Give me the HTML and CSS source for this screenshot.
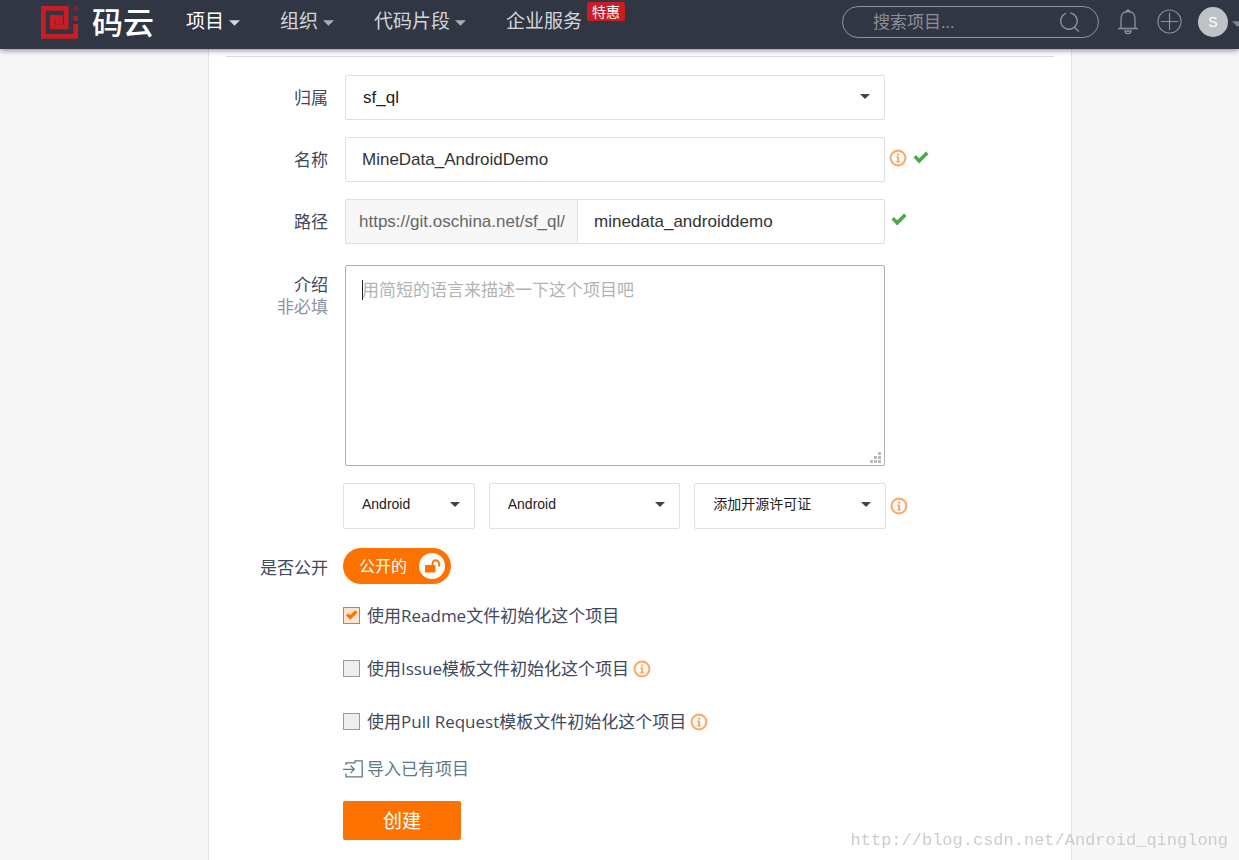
FILE: index.html
```
<!DOCTYPE html>
<html lang="zh-CN">
<head>
<meta charset="utf-8">
<title>码云</title>
<link rel="stylesheet" href="styles.css">
</head>
<body>
<svg class="defs" aria-hidden="true">
  <symbol id="caret" viewBox="0 0 12 6"><path d="M0 0h12L6 6z" fill="currentColor"/></symbol>
  <symbol id="info" viewBox="0 0 18 18"><circle cx="9" cy="9" r="7.4" fill="none" stroke="currentColor" stroke-width="2.2"/><path d="M8 4.4h2.200v2H8zM6.800 7.400h3.400v4.800h1.200v1.300H6.800v-1.300H8V8.700H6.800z" fill="currentColor"/></symbol>
  <symbol id="check" viewBox="0 0 16 13"><path d="M0.500 6.500 3 4l3.200 3.200L13 0.500l2.600 2.600L6.200 12.400z" fill="currentColor"/></symbol>
</svg>
<header class="topbar">
  <a class="brand" href="#">
    <svg class="brand-mark" viewBox="0 0 37 33" aria-hidden="true"><path d="M34.600 18V30.300H2.400V2.400H25.200V20.800H11.400V11.300H19.500V15.800H14.500" fill="none" stroke="#c71d23" stroke-width="4.800"/><path d="M32.200 10h4.800v4.800h-4.800z" fill="#a82029"/><path d="M32.200 0h4.800v4.800h-4.800z" fill="#7b2631"/></svg>
    <span class="brand-name">码云</span>
  </a>
  <nav class="nav">
    <a class="nav-item active" href="#">项目<svg class="caret"><use href="#caret"/></svg></a>
    <a class="nav-item" href="#">组织<svg class="caret"><use href="#caret"/></svg></a>
    <a class="nav-item" href="#">代码片段<svg class="caret"><use href="#caret"/></svg></a>
    <a class="nav-item" href="#">企业服务<span class="badge">特惠</span></a>
  </nav>
  <div class="tools">
    <div class="search">
      <input class="search-input" type="search" placeholder="搜索项目..." aria-label="搜索项目">
      <svg class="search-icon" viewBox="0 0 20 20" aria-hidden="true"><path d="M6 1.400A8.200 8.200 0 1 0 10.500 1M14.500 15.500l4.500 4" fill="none" stroke="currentColor" stroke-width="1.400"/></svg>
    </div>
    <button class="icon-button" type="button" aria-label="通知"><svg class="bell" viewBox="0 0 20 26"><path d="M0 19.500h20M3 19.500V9.500C3 5 6 2.500 10 2.500s7 2.500 7 7v10M8.500 2.500c0-2 3-2 3 0M7 22c0 3.500 6 3.500 6 0z" fill="none" stroke="currentColor" stroke-width="1.300"/></svg></button>
    <button class="icon-button" type="button" aria-label="新建"><svg class="plus" viewBox="0 0 26 26"><circle cx="13" cy="13" r="12" fill="none" stroke="currentColor" stroke-width="1.200"/><path d="M4 13h18M13 4v18" stroke="currentColor" stroke-width="1.200"/></svg></button>
    <button class="account" type="button" aria-label="账户"><span class="avatar">S</span><svg class="caret"><use href="#caret"/></svg></button>
  </div>
</header>

<main class="page">
  <form class="form">
    <div class="row">
      <label class="label" for="owner">归属</label>
      <div class="select-wrap">
        <select class="control select" id="owner"><option>sf_ql</option></select>
        <svg class="select-caret"><use href="#caret"/></svg>
      </div>
    </div>
    <div class="row">
      <label class="label" for="name">名称</label>
      <input class="control" id="name" type="text" value="MineData_AndroidDemo">
      <div class="marks"><svg class="info"><use href="#info"/></svg><svg class="check"><use href="#check"/></svg></div>
    </div>
    <div class="row">
      <label class="label" for="path">路径</label>
      <div class="group">
        <span class="prefix">https://git.oschina.net/sf_ql/</span>
        <input class="control path-input" id="path" type="text" value="minedata_androiddemo">
      </div>
      <div class="marks marks-single"><svg class="check"><use href="#check"/></svg></div>
    </div>
    <div class="row row-top">
      <label class="label label-stack" for="intro">介绍<span class="optional">非必填</span></label>
      <div class="textarea-wrap">
        <textarea class="control textarea" id="intro" placeholder="用简短的语言来描述一下这个项目吧"></textarea>
        <svg class="grip" viewBox="0 0 11 11" aria-hidden="true"><path d="M8 0h3v3H8zM4 4h3v3H4zM8 4h3v3H8zM0 8h3v3H0zM4 8h3v3H4zM8 8h3v3H8z" fill="#bbb"/></svg>
      </div>
    </div>
    <div class="row row-wide">
      <span></span>
      <div class="selects">
        <div class="select-wrap"><select class="control select small" aria-label="语言"><option>Android</option></select><svg class="select-caret"><use href="#caret"/></svg></div>
        <div class="select-wrap"><select class="control select small" aria-label=".gitignore"><option>Android</option></select><svg class="select-caret"><use href="#caret"/></svg></div>
        <div class="select-wrap"><select class="control select small" aria-label="开源许可证"><option>添加开源许可证</option></select><svg class="select-caret"><use href="#caret"/></svg></div>
      </div>
      <svg class="info"><use href="#info"/></svg>
    </div>
    <div class="row row-wide">
      <span class="label label-low" id="public-label">是否公开</span>
      <div>
        <button class="toggle" type="button" aria-describedby="public-label">公开的
          <span class="knob"><svg class="lock" viewBox="0 0 17 14" aria-hidden="true"><path d="M1 6h10.500v7.500H1z" fill="currentColor"/><path d="M8.500 6.500V4.500a3.200 3.200 0 0 1 6.500 0V7.500" fill="none" stroke="currentColor" stroke-width="1.800"/></svg></span>
        </button>
      </div>
    </div>
    <div class="options">
      <div class="option"><input class="tick" type="checkbox" id="readme" checked><label for="readme">使用Readme文件初始化这个项目</label></div>
      <div class="option"><input class="tick" type="checkbox" id="issue"><label for="issue">使用Issue模板文件初始化这个项目</label><svg class="info"><use href="#info"/></svg></div>
      <div class="option"><input class="tick" type="checkbox" id="pull"><label for="pull">使用Pull Request模板文件初始化这个项目</label><svg class="info"><use href="#info"/></svg></div>
      <a class="import" href="#"><svg class="import-icon" viewBox="0 0 20 18" aria-hidden="true"><path d="M3 5V2.800h9V.8h7.200v16H3v-3.300M0 9.300h11M7.500 5.500l3.800 3.800-3.800 3.800" fill="none" stroke="currentColor" stroke-width="1.300"/></svg>导入已有项目</a>
      <button class="submit" type="submit">创建</button>
    </div>
  </form>
</main>
<div class="watermark">http://blog.csdn.net/Android_qinglong</div>
</body>
</html>
```

FILE: styles.css
```
* { box-sizing: border-box; }
body {
  margin: 0;
  min-height: 100vh;
  display: flex;
  flex-direction: column;
  background: #f7f7f7;
  color: #40485b;
  font: 17px/22px "Open Sans", "Noto Sans CJK SC", sans-serif;
}
input, select, textarea, button { font: inherit; color: inherit; margin: 0; }
a { color: inherit; text-decoration: none; }
button { border: 0; padding: 0; background: none; cursor: pointer; }
svg { display: block; flex: none; }
.defs { position: absolute; width: 0; height: 0; }

.topbar {
  position: relative;
  display: flex;
  align-items: flex-start;
  height: 49px;
  padding-left: 41px;
  background: #303643;
  box-shadow: 0 1px 6px rgba(0, 0, 0, .5);
  clip-path: inset(0 0 -12px 0);
}
.brand { display: flex; align-items: center; gap: 14px; height: 44px; }
.brand-mark { width: 37px; height: 33px; }
.brand-name { color: #fff; font-size: 31px; font-weight: 500; line-height: 44px; }
.nav { display: flex; gap: 40px; margin-left: 32px; }
.nav-item {
  display: flex;
  align-items: center;
  gap: 5px;
  height: 42px;
  color: #d3d6d9;
  font-size: 19px;
  white-space: nowrap;
}
.active { color: #fff; }
.caret { width: 11px; height: 6px; margin-top: 4px; color: #a9acb3; }
.active .caret { color: #d3d6d9; }
.badge {
  align-self: flex-start;
  margin-top: 2px;
  padding: 0 5px;
  border-radius: 2px;
  background: #c71d23;
  color: #fff;
  font-size: 14px;
  line-height: 19px;
}
.tools { display: flex; align-items: center; height: 43px; margin-left: auto; color: #8c92a4; }
.search {
  display: flex;
  align-items: center;
  width: 257px;
  height: 32px;
  padding: 0 18px 0 30px;
  border: 1px solid #8c92a4;
  border-radius: 16px;
}
.search-input { flex: 1; min-width: 0; padding: 0; border: 0; outline: 0; background: none; }
.search-input::placeholder { color: #8d8f96; }
.search-icon { width: 20px; height: 20px; }
.icon-button { margin-left: 19px; }
.bell { width: 20px; height: 26px; }
.plus { width: 25px; height: 25px; }
.account { display: flex; align-items: center; gap: 4px; width: 41px; margin-left: 16px; overflow: hidden; }
.account .caret { color: #7d8391; }
.avatar {
  flex: none;
  width: 30px;
  height: 30px;
  border-radius: 50%;
  background: #bdc3c7;
  color: #fff;
  font: 14px/30px "Liberation Sans", sans-serif;
}

.page {
  flex: 1;
  margin: 0 167px 0 208px;
  padding: 7px 17px 20px;
  border: solid #e1e5e9;
  border-width: 0 1px;
  background: #fff;
}
.form {
  display: flex;
  flex-direction: column;
  gap: 17px;
  padding-top: 18px;
  border-top: 1px solid #ddd;
}
.row {
  display: grid;
  grid-template-columns: 102px minmax(0, 540px) auto;
  column-gap: 17px;
  align-items: center;
}
.row-wide { grid-template-columns: 102px minmax(0, 543px) auto; column-gap: 15px; }
.row-wide > .info { margin-left: -11px; }
.row-top { align-items: start; margin-top: 4px; }
.label { text-align: right; }
.label-stack { padding-top: 9px; }
.label-low { padding-top: 6px; }
.optional { display: block; color: #8c92a4; }
.control {
  display: block;
  width: 100%;
  height: 45px;
  padding: 0 16px;
  border: 1px solid #dce1e6;
  border-radius: 2px;
  outline: 0;
  background: #fff;
  color: #333;
  font-family: "Liberation Sans", "Noto Sans CJK SC", sans-serif;
}
.select-wrap, .textarea-wrap { position: relative; }
.select { appearance: none; padding-left: 17px; color: #222; }
.select-caret {
  position: absolute;
  top: 19px;
  right: 15px;
  width: 10px;
  height: 5px;
  color: #444;
  pointer-events: none;
}
.small { height: 46px; padding: 0 18px 4px; font-size: 14px; }
.selects { display: grid; grid-template-columns: 132fr 192fr 192fr; gap: 14px; }
.marks { display: flex; align-items: center; gap: 6px; margin: -4px 0 0 -13px; }
.marks-single { margin-left: -11px; }
.info { width: 18px; height: 18px; color: #feab69; }
.check { width: 16px; height: 13px; color: #49ac4f; }
.group { display: flex; }
.prefix {
  flex: none;
  padding: 0 12px 0 13px;
  border: 1px solid #dce1e6;
  border-right: 0;
  border-radius: 2px 0 0 2px;
  background: #f7f7f7;
  color: #666;
  font-family: "Liberation Sans", sans-serif;
  line-height: 43px;
}
.path-input { flex: 1; width: auto; min-width: 0; border-radius: 0 2px 2px 0; }
.textarea {
  height: 201px;
  padding: 14px 16px;
  border-color: #adb1b6;
  resize: none;
  background: linear-gradient(#222, #222) 16px 14px / 1px 20px no-repeat #fff;
}
.textarea::placeholder { color: #b3b3b3; }
.grip { position: absolute; right: 4px; bottom: 3px; width: 11px; height: 11px; }
.toggle {
  display: flex;
  align-items: center;
  justify-content: space-between;
  width: 108px;
  height: 36px;
  margin-top: 2px;
  padding: 0 6px 0 16px;
  border-radius: 18px;
  background: #fe7300;
  color: #fff;
  font-size: 16px;
}
.knob {
  display: grid;
  place-items: center;
  width: 26px;
  height: 26px;
  border-radius: 50%;
  background: #fff;
  color: #fe7300;
}
.lock { width: 17px; height: 14px; }
.options { display: flex; flex-direction: column; align-items: flex-start; margin: 4px 0 0 117px; }
.option { display: flex; align-items: center; gap: 4px; margin-bottom: 31px; }
.tick {
  appearance: none;
  width: 17px;
  height: 17px;
  margin: -2px 3px 0 0;
  border: 1px solid #999;
  background: #eee;
}
.tick:checked {
  border-color: #fe7300;
  background: #fee3cc;
}
.tick:checked::before {
  content: "";
  display: block;
  height: 100%;
  background: #fe7300;
  clip-path: polygon(12% 52%, 28% 38%, 42% 52%, 74% 18%, 90% 33%, 42% 82%);
}
.import { display: flex; align-items: center; gap: 4px; margin-top: -6px; color: #5d7a89; }
.import-icon { width: 20px; height: 18px; }
.submit {
  width: 118px;
  height: 39px;
  margin-top: 21px;
  border-radius: 2px;
  background: #fe7300;
  color: #fff;
  font-size: 19px;
}
.watermark {
  position: fixed;
  right: 11px;
  bottom: 8px;
  color: #ccccc8;
  font: 17px/22px "Liberation Mono", monospace;
  pointer-events: none;
}
```
